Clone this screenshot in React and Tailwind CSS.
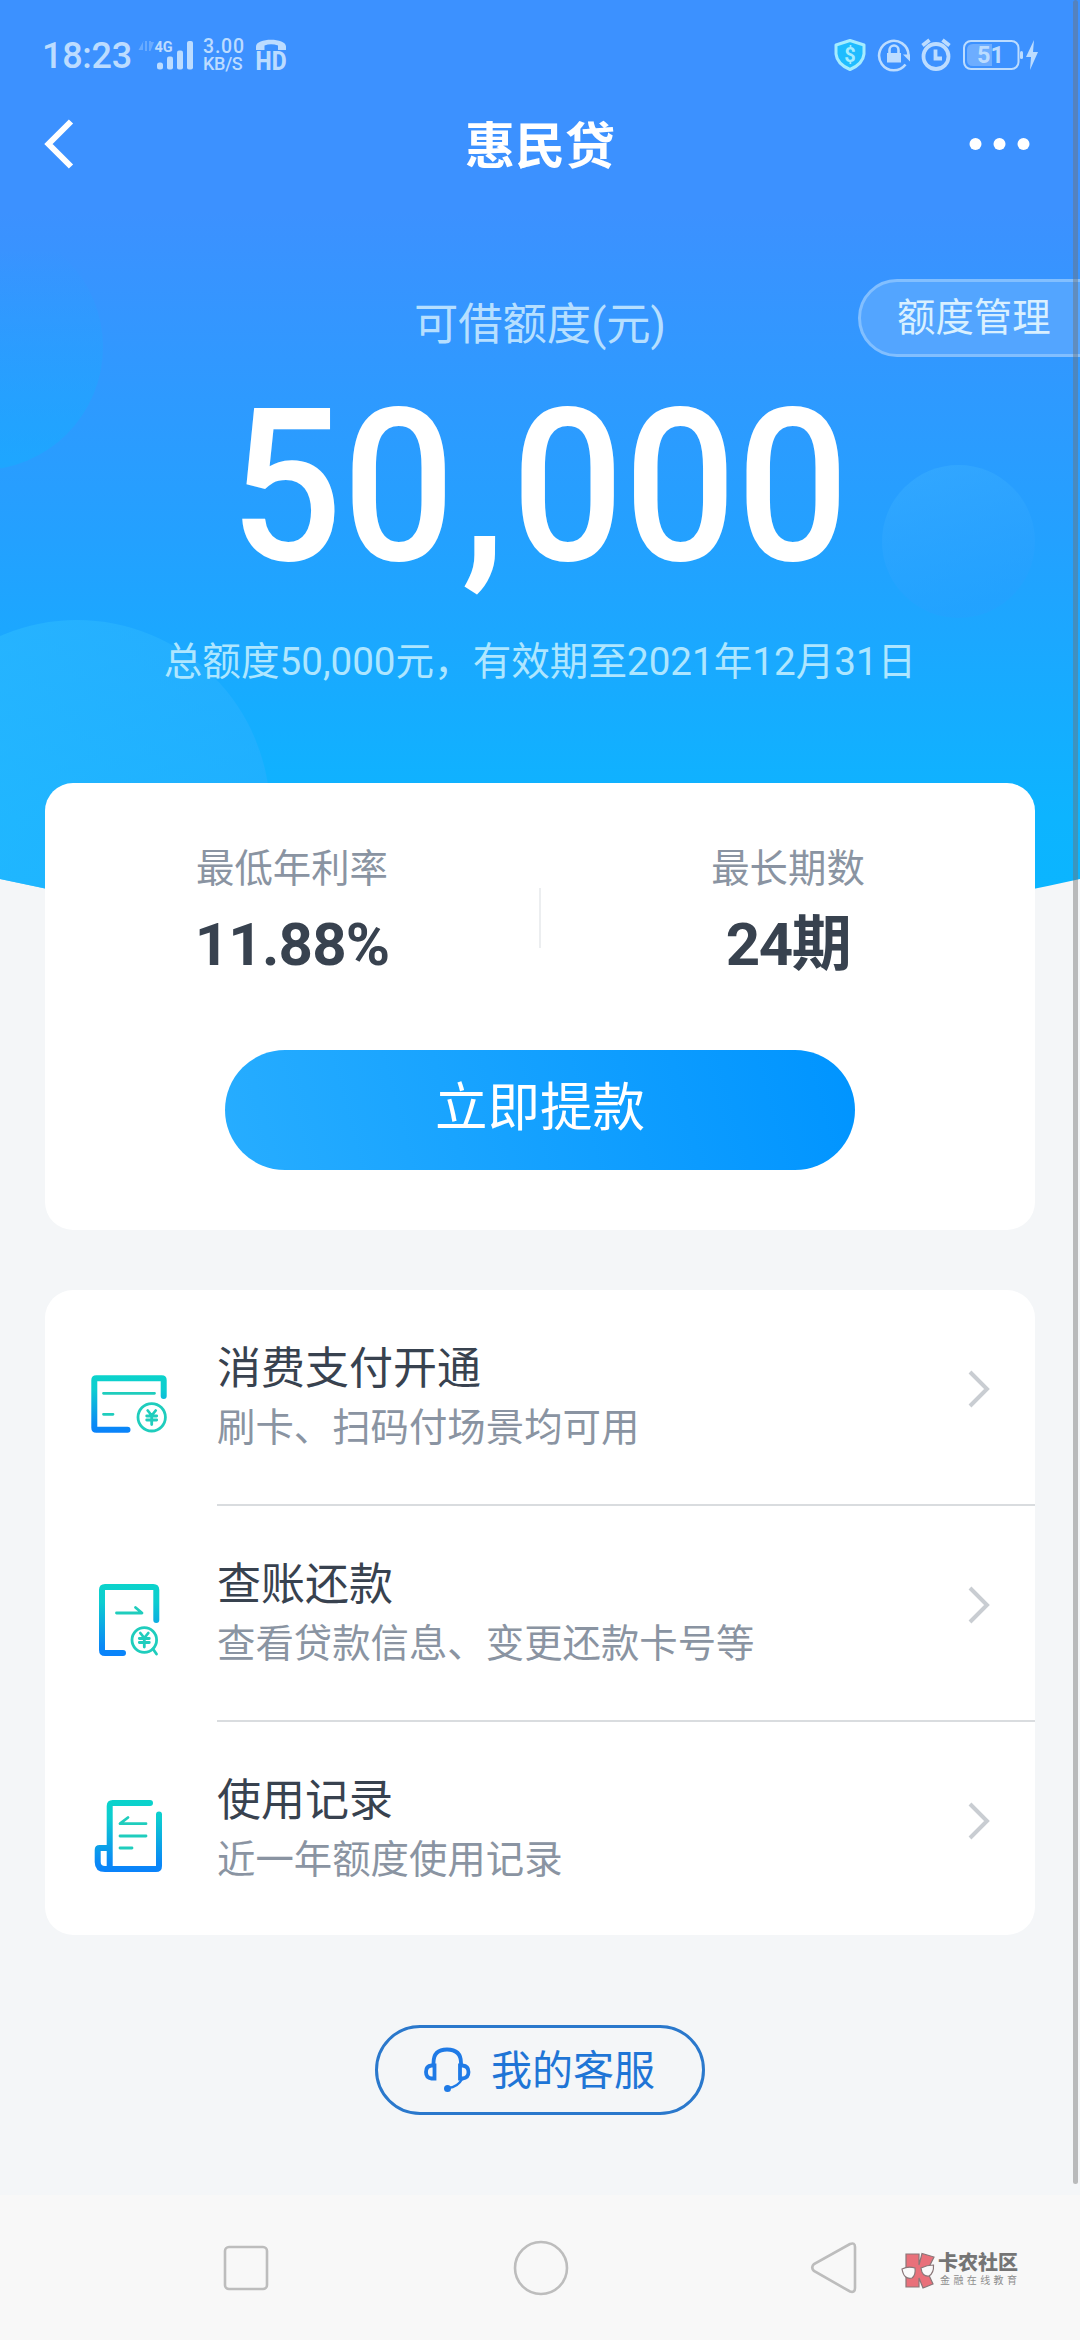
import { useState } from 'react';


const Backdrop = () => (
    <svg className="absolute left-0 top-0" width="1080" height="960" viewBox="0 0 1080 960">
        <defs>
            <linearGradient id="sky" x1="0" y1="0" x2="0" y2="1">
                <stop offset="0.22" stopColor="#3c91ff" />
                <stop offset="0.55" stopColor="#24a0ff" />
                <stop offset="0.85" stopColor="#0db4ff" />
                <stop offset="1" stopColor="#08b6ff" />
            </linearGradient>
            <linearGradient id="bubbleLeft" x1="0" y1="0" x2="0" y2="1">
                <stop offset="0.1" stopColor="#0cb4ff" stopOpacity="0" />
                <stop offset="1" stopColor="#0cb4ff" stopOpacity="0.4" />
            </linearGradient>
            <linearGradient id="bubbleRight" x1="0" y1="0" x2="0.3" y2="1">
                <stop offset="0" stopColor="#3fb4ff" stopOpacity="0.45" />
                <stop offset="1" stopColor="#2a9dff" stopOpacity="0.35" />
            </linearGradient>
            <linearGradient id="bubbleBottom" x1="0" y1="0" x2="1" y2="0.3">
                <stop offset="0" stopColor="#2bbdff" stopOpacity="0.7" />
                <stop offset="1" stopColor="#2bb0ff" stopOpacity="0.55" />
            </linearGradient>
            <clipPath id="skyShape">
                <path d="M0 0H1080V879Q540 1000 0 879Z" />
            </clipPath>
        </defs>
        <g clipPath="url(#skyShape)">
            <rect width="1080" height="960" fill="url(#sky)" />
            <circle cx="-20" cy="347" r="123" fill="url(#bubbleLeft)" />
            <circle cx="958.5" cy="541.5" r="76.5" fill="url(#bubbleRight)" />
            <circle cx="77" cy="813" r="193" fill="url(#bubbleBottom)" />
        </g>
    </svg>
)

const StatusBar = () => (
    <div className="flex h-[108px] items-center justify-between pl-[42px] pr-[40px] pt-[2px] text-[#bcdcff]">
        <div className="flex items-center">
            <span className="w-[92px] pt-[2px] text-[36px] leading-[44px] font-medium whitespace-nowrap tracking-[-0.3px]">18:23</span>
            <svg width="60" height="34" viewBox="0 0 60 34" className="ml-[2px]" fill="currentColor">
                <path d="M7 3v9h-4.500l5-9zM9 3h2v10h-2zM13 3h2v10h-2zM15 13v-9h3l-3.500 9z" opacity="0.35" />
                <text x="18.500" y="14" fontSize="14.500" fontWeight="700">4G</text>
                <rect x="21" y="24.500" width="6" height="7" rx="2.500" />
                <rect x="31" y="18.500" width="6" height="13" rx="2" />
                <rect x="41" y="12.500" width="6" height="19" rx="2" />
                <rect x="51" y="3" width="6" height="28.500" rx="2" />
            </svg>
            <div className="ml-[7px] flex w-[44px] flex-col text-[19.500px] leading-[17.500px] font-medium whitespace-nowrap">
                <span className="tracking-[0.8px]">3.00</span>
                <span className="text-[18px] tracking-[-0.3px]">KB/S</span>
            </div>
            <svg width="32" height="34" viewBox="0 0 32 34" className="ml-[8px] overflow-visible" fill="currentColor">
                <path d="M1 12V8.500C1 -0.500 31 -0.500 31 8.500V12H23V7.500Q16 5 9.500 7.500V12Z" />
                <text x="0.500" y="32" fontSize="26" fontWeight="800" textLength="31" lengthAdjust="spacingAndGlyphs">HD</text>
            </svg>
        </div>
        <div className="flex items-center">
            <svg width="32" height="34" viewBox="0 0 32 34">
                <path d="M16 2.500L30 7V16Q29 26 16 31.500Q3 26 2 16V7Z" fill="#1fbcff" stroke="#a5ecff" strokeWidth="3" strokeLinejoin="round" />
                <text x="16" y="24" fontSize="20" fontWeight="700" fill="#a5ecff" textAnchor="middle">$</text>
            </svg>
            <svg width="34" height="34" viewBox="0 0 34 34" className="ml-[11px]" fill="none" stroke="currentColor" strokeWidth="2.600">
                <path d="M28.500 26.500A14.700 14.700 0 1 1 31.500 17" />
                <path d="M26 16.500H33V23.500Z" fill="currentColor" stroke="none" />
                <rect x="10" y="15" width="14" height="9.500" fill="currentColor" stroke="none" />
                <path d="M12.500 15v-3a4.500 4.500 0 0 1 9 0v3" />
            </svg>
            <svg width="32" height="34" viewBox="0 0 32 34" className="ml-[9px]" fill="none" stroke="currentColor" strokeWidth="3.800">
                <circle cx="16" cy="18.500" r="12.500" />
                <path d="M15.500 11.500v9h6.500M2.500 7.500l7-5.500M29.500 7.500L22.500 2" />
            </svg>
            <svg width="78" height="34" viewBox="0 0 78 34" className="ml-[10px]">
                <rect x="2" y="3" width="54.500" height="28" rx="7" fill="none" stroke="currentColor" strokeWidth="2" />
                <path d="M30 6H11Q5 6 5 12V22Q5 28 11 28H30Z" fill="#6dadff" />
                <rect x="58" y="13" width="3" height="8" rx="1.500" fill="currentColor" />
                <text x="28.500" y="25" fontSize="23.500" fontWeight="700" fill="currentColor" textAnchor="middle">51</text>
                <path d="M72 2L64 19H69L68 32L76 14H71Z" fill="currentColor" />
            </svg>
        </div>
    </div>
)

const NavHeader = () => (
    <div className="grid h-[72px] grid-cols-[1fr_auto_1fr] items-center pl-[42px] pr-[50px] text-white">
        <svg width="40" height="52" viewBox="0 0 40 52" className="-mt-[4px]" fill="none" stroke="currentColor" strokeWidth="6">
            <path d="M29 3.500L6.500 26L29 48.500" />
        </svg>
        <h1 className="pl-[8px] pt-[3px] text-[50px] leading-[72px] font-bold">惠民贷</h1>
        <svg width="62" height="14" viewBox="0 0 62 14" className="-mt-[3px] justify-self-end" fill="currentColor">
            <circle cx="7.500" cy="7" r="6" />
            <circle cx="31.500" cy="7" r="6" />
            <circle cx="55.500" cy="7" r="6" />
        </svg>
    </div>
)

const IconGradient = ({ id, y1, y2 }) => (
    <defs>
        <linearGradient id={id} gradientUnits="userSpaceOnUse" x1="0" y1={y1} x2="0" y2={y2}>
            <stop offset="0" stopColor="#0bd3cb" />
            <stop offset="0.25" stopColor="#0dcdd0" />
            <stop offset="0.85" stopColor="#0a8af5" />
            <stop offset="1" stopColor="#0a82fb" />
        </linearGradient>
    </defs>
)

const Yen = ({ x, y }) => (
    <path transform={`translate(${x} ${y})`} d="M-4 -6.500L0 -1.500L4 -6.500M-5 -1H5M-5 3H5M0 -1.500V7.500" />
)

const PayIcon = () => (
    <svg width="80" height="80" viewBox="0 0 80 80" fill="none" strokeLinecap="round" strokeLinejoin="round">
        <IconGradient id="payGrad" y1="11" y2="69" />
        <path d="M39.500 65.700H8.300Q6.300 65.700 6.300 63.700V16.300Q6.300 14.300 8.300 14.300H73.700Q75.700 14.300 75.700 16.300V32" stroke="url(#payGrad)" strokeWidth="6" />
        <g stroke="#1fcdbd" strokeWidth="2.800">
            <path d="M15.500 29.300H66.500M15.500 50.300H25" />
            <circle cx="63.700" cy="53.300" r="13.700" />
            <Yen x={63.7} y={53} />
        </g>
    </svg>
)

const BillIcon = () => (
    <svg width="80" height="80" viewBox="0 0 80 80" fill="none" strokeLinecap="round" strokeLinejoin="round">
        <IconGradient id="billGrad" y1="4" y2="76" />
        <path d="M35 73H17Q14 73 14 70V10Q14 7 17 7H65.300Q68.300 7 68.300 10V40" stroke="url(#billGrad)" strokeWidth="6" />
        <g stroke="#1fcdbd" strokeWidth="2.800">
            <path d="M28.500 33H54L47.500 27.500" />
            <circle cx="56.300" cy="60" r="12.300" />
            <path d="M65 69L68.500 74" />
            <Yen x={56.3} y={59.5} />
        </g>
    </svg>
)

const RecordIcon = () => (
    <svg width="80" height="80" viewBox="0 0 80 80" fill="none" strokeLinecap="round" strokeLinejoin="round">
        <IconGradient id="recordGrad" y1="4" y2="76" />
        <path d="M62 7H24.700Q21.700 7 21.700 10V73M71 18.500V70Q71 73 68 73H17Q9.700 73 9.700 66V54Q9.700 52 11.700 52H21.700" stroke="url(#recordGrad)" strokeWidth="6" />
        <path d="M40 21.500L32 27.700H58M32 40H58M32 52H44" stroke="#1fcdbd" strokeWidth="2.800" />
    </svg>
)

const services = [
    { title: '消费支付开通', desc: '刷卡、扫码付场景均可用', Icon: PayIcon },
    { title: '查账还款', desc: '查看贷款信息、变更还款卡号等', Icon: BillIcon },
    { title: '使用记录', desc: '近一年额度使用记录', Icon: RecordIcon },
];

const ServiceRow = ({ item, last }) => {
    const { title, desc, Icon } = item;
    return (
        <div className="flex h-[216px] pl-[43px]">
            <div className="w-[129px] pt-[74px]"><Icon /></div>
            <div className={last ? 'flex flex-1 justify-between' : 'flex flex-1 justify-between border-b-2 border-[#d9dcdf]'}>
                <div className="pt-[49px]">
                    <h2 className="text-[44px] leading-[60px] text-[#38424f]">{title}</h2>
                    <p className="text-[38.4px] leading-[57px] text-[#8a94a2]">{desc}</p>
                </div>
                <svg width="28" height="40" viewBox="0 0 28 40" className="mt-[79px] mr-[42px]" fill="none" stroke="#c9cdd2" strokeWidth="4">
                    <path d="M5 3L22 20L5 37" />
                </svg>
            </div>
        </div>
    )
}

const HeadsetIcon = () => (
    <svg width="54" height="54" viewBox="0 0 54 54" fill="none" stroke="#1f7ae6" strokeWidth="3.800">
        <path d="M13.500 22V20Q13.500 6.500 27 6.500Q41 6.500 41 20V22" />
        <path d="M14.500 22.500V35.500H11.500Q6 35 6 29T11.500 22.500Z" />
        <path d="M40 22.500V35.500H42.500Q48.500 35 48.500 29T42.500 22.500Z" />
        <path d="M42 36Q38 44 28 45" strokeWidth="2.500" />
        <circle cx="27.500" cy="45.500" r="3.500" fill="#1f7ae6" stroke="none" />
    </svg>
)

const Watermark = () => (
    <div className="absolute left-[900px] top-[57px] flex">
        <svg width="38" height="38" viewBox="0 0 38 38" stroke="#8a7779" strokeWidth="1.200">
            <path d="M6 2H19V13L22 1.500L34 5L27 19L33 32L23 36L19 26V35H6Z" fill="#e9707a" />
            <path d="M2 17Q8 14 15 16Q16 23 12 26Q4 28 2 17ZM21 16Q27 13 33.500 13Q34 21 29 24Q22 25 21 16Z" fill="#fafafa" />
        </svg>
        <div className="text-[#757575]">
            <p className="text-[20px] leading-[22px] font-black">卡农社区</p>
            <p className="pl-[2px] text-[10px] leading-[13px] tracking-[3.400px] text-[#8d8d8d]">金融在线教育</p>
        </div>
    </div>
)

const SystemNav = () => (
    <div className="relative flex h-[145px] items-center justify-between bg-[#f8f8f8] pl-[216px] pr-[215px]">
        <svg width="60" height="60" viewBox="0 0 60 60" fill="none" stroke="#bdbdbd" strokeWidth="2.600">
            <rect x="9" y="9" width="42" height="42" rx="4" />
        </svg>
        <svg width="60" height="60" viewBox="0 0 60 60" fill="none" stroke="#bdbdbd" strokeWidth="2.600">
            <circle cx="30" cy="30" r="26" />
        </svg>
        <svg width="60" height="60" viewBox="0 0 60 60" fill="none" stroke="#bdbdbd" strokeWidth="2.600">
            <path d="M9 26Q5.500 29.500 9 33L45 53.500Q50 55 50 50V9Q50 4 45 6Z" />
        </svg>
        <Watermark />
    </div>
)

const App = () => {
    const [limit] = useState({ available: ['50', '000'], rate: '11.88%', term: '24期' });

    return (
        <div className="relative flex h-[2340px] w-[1080px] flex-col overflow-hidden bg-[#f4f6f8] font-[Roboto,'Noto_Sans_CJK_SC',sans-serif]">
            <Backdrop />
            <div className="relative flex flex-1 flex-col">
                <StatusBar />
                <NavHeader />

                <div className="relative flex h-[603px] flex-col items-center pt-[112px]">
                    <p className="text-[44.300px] leading-[66px] text-[#b6dfff]">可借额度(元)</p>
                    <div className="mt-[21px] flex h-[216px] origin-center scale-x-[0.925] text-[214px] leading-[216px] font-medium text-white">
                        <span>{limit.available[0]}</span>
                        <span className="w-[61px] text-center">,</span>
                        <span>{limit.available[1]}</span>
                    </div>
                    <p className="mt-[39px] text-[38.600px] leading-[56px] text-[#aee6ff]">总额度50,000元，有效期至2021年12月31日</p>
                    <button className="absolute right-[-3px] top-[99px] h-[78px] w-[225px] rounded-l-full border-[3px] border-[#82bfff] bg-[#53a5ff] pl-[36px] text-left text-[38.4px] leading-[70px] text-[#d9f0ff]">额度管理</button>
                </div>

                <div className="mx-[45px] flex h-[447px] flex-col items-center rounded-[28px] bg-white pt-[58px]">
                    <div className="flex w-full items-start text-center">
                        <div className="flex-1">
                            <p className="text-[38.4px] leading-[56px] text-[#8a94a2]">最低年利率</p>
                            <p className="text-[60px] leading-[96px] font-bold tracking-[-0.8px] text-[#38424f]">{limit.rate}</p>
                        </div>
                        <div className="mt-[47px] h-[60px] w-[2px] bg-[#eceef0]" />
                        <div className="flex-1">
                            <p className="text-[38.4px] leading-[56px] text-[#8a94a2]">最长期数</p>
                            <p className="text-[60px] leading-[96px] font-bold tracking-[-1.500px] text-[#38424f]">{limit.term}</p>
                        </div>
                    </div>
                    <button className="mt-[57px] h-[120px] w-[630px] rounded-full bg-linear-[75deg,#27adff,#0094ff] pb-[4px] text-[52.500px] leading-[112px] text-white">立即提款</button>
                </div>

                <div className="mx-[45px] mt-[60px] h-[645px] rounded-[28px] bg-white">
                    {services.map((item, i) => (
                        <ServiceRow key={item.title} item={item} last={i === services.length - 1} />
                    ))}
                </div>

                <button className="mx-auto mt-[90px] flex h-[90px] w-[330px] items-center rounded-full border-[3px] border-[#2a78cc] pl-[42px] text-[41px] text-[#1f75d6]">
                    <HeadsetIcon />
                    <span className="ml-[17px] pt-[3px] whitespace-nowrap">我的客服</span>
                </button>
            </div>
            <SystemNav />
            <div className="absolute right-[2px] top-0 h-[2184px] w-[5px] rounded-full bg-[#707070]/45" />
        </div>
    )
}

export default App
